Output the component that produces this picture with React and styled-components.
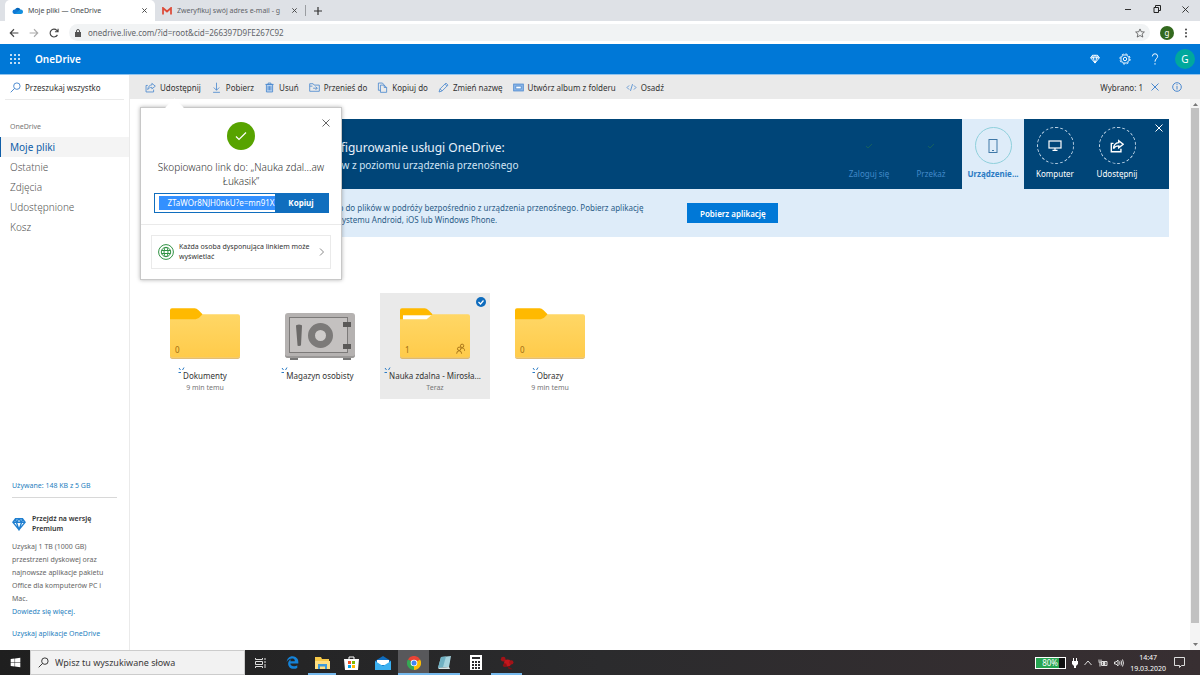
import React from 'react'
import styled, { createGlobalStyle } from 'styled-components'
import { FaEdgeLegacy, FaWindows } from 'react-icons/fa'

const GlobalStyle = createGlobalStyle`
    * {
        box-sizing: border-box;
    }
    body {
        margin: 0;
        font-family: "Noto Sans", "Open Sans", sans-serif;
        font-size: 8px;
        color: #333;
        background-color: white;
    }
    button, input {
        font-family: inherit;
        font-size: inherit;
        color: inherit;
        border: none;
        padding: 0;
        margin: 0;
        background: none;
        outline: none;
    }
    h1, h2, p, ul {
        margin: 0;
        padding: 0;
        font-weight: 400;
        list-style: none;
    }
    a {
        color: inherit;
        text-decoration: none;
    }
    svg {
        display: block;
        flex-shrink: 0;
    }
`

const Page = styled.div`
    height: 100vh;
    display: flex;
    flex-direction: column;
    overflow: hidden;
`

/* ---------- browser window ---------- */

const TabStrip = styled.div`
    height: 21px;
    display: flex;
    align-items: stretch;
    background-color: #dee1e6;
    padding-left: 5px;
    flex-shrink: 0;
`
const Tab = styled.div`
    width: 150px;
    display: flex;
    align-items: center;
    gap: 5px;
    padding: 0 8px 0 7px;
    font-size: 7px;
    color: ${props => props.$active ? "#45494d" : "#5f6368"};
    background-color: ${props => props.$active ? "white" : "transparent"};
    border-radius: 5px 5px 0 0;
`
const TabTitle = styled.span`
    flex: 1;
    overflow: hidden;
    white-space: nowrap;
`
const NewTab = styled.div`
    display: flex;
    align-items: center;
    padding-left: 8px;
    margin: 5px 0;
    border-left: 1px solid #9a9da1;
`
const WindowButtons = styled.div`
    margin-left: auto;
    display: flex;
    align-items: center;
    gap: 21px;
    padding-right: 11px;
    padding-bottom: 3px;
`
const IconButton = styled.button`
    display: flex;
    align-items: center;
    justify-content: center;
    cursor: pointer;
`
const AddressBar = styled.div`
    height: 23px;
    display: flex;
    align-items: center;
    padding: 0 12px 0 9px;
    gap: 10px;
    flex-shrink: 0;
    background-color: white;
`
const UrlBox = styled.label`
    flex: 1;
    height: 17px;
    display: flex;
    align-items: center;
    gap: 7px;
    padding: 0 5px 0 6px;
    background-color: #f1f3f4;
    border-radius: 9px;
`
const UrlInput = styled.input`
    flex: 1;
    color: #5f6368;
`
const Account = styled.button`
    width: ${props => props.$size};
    height: ${props => props.$size};
    border-radius: 50%;
    background-color: ${props => props.$bg};
    color: white;
    font-size: ${props => props.$font};
    line-height: 1;
    flex-shrink: 0;
`

/* ---------- OneDrive ---------- */

const Header = styled.header`
    height: 31px;
    display: flex;
    align-items: center;
    padding: 0 5px 0 10px;
    background-color: #0078d7;
    border-bottom: 1px solid #8fc3ee;
    color: white;
    flex-shrink: 0;
`
const Brand = styled.h1`
    font-size: 10px;
    font-weight: 600;
    margin-left: 15px;
`
const HeaderIcons = styled.div`
    margin-left: auto;
    margin-right: 5px;
    display: flex;
    align-items: center;
`
const HeaderButton = styled(IconButton)`
    width: 30px;
    height: 30px;
`
const Body = styled.div`
    flex: 1;
    min-height: 0;
    display: flex;
`
const Sidebar = styled.aside`
    width: 130px;
    display: flex;
    flex-direction: column;
    border-right: 1px solid #eaeaea;
    flex-shrink: 0;
`
const Search = styled.label`
    display: flex;
    align-items: center;
    gap: 4px;
    height: 25px;
    margin: 0 5px;
    padding-left: 5px;
    border-bottom: 1px solid #eaeaea;
`
const SearchInput = styled.input`
    width: 100px;
    &::placeholder {
        color: #333;
        opacity: 1;
    }
`
const NavTitle = styled.p`
    font-size: 7px;
    line-height: 20px;
    padding-left: 10px;
    margin-top: 17px;
    color: #777;
`
const NavItem = styled.a`
    display: block;
    height: 20px;
    line-height: 20px;
    font-size: 10px;
    font-weight: ${props => props.$active ? 400 : 300};
    padding-left: ${props => props.$active ? "9px" : "10px"};
    color: ${props => props.$active ? "#0f5ea8" : "#555"};
    background-color: ${props => props.$active ? "#f4f4f4" : "transparent"};
    border-left: ${props => props.$active ? "1px solid #0f5ea8" : "none"};
`
const SideFooter = styled.div`
    margin-top: auto;
    padding: 0 12px 10px;
    font-size: 7px;
    line-height: 13px;
    color: #666;
`
const SideLink = styled.a`
    display: block;
    color: #1f7fc0;
    margin-top: ${props => props.$space || "0"};
`
const Rule = styled.div`
    height: 1px;
    margin: 5px 0 16px;
    background-color: #d8d8d8;
`
const Premium = styled.div`
    display: flex;
    align-items: center;
    gap: 6px;
    margin-bottom: 6px;
    font-weight: 600;
    line-height: 10px;
    color: #333;
`
const Content = styled.div`
    flex: 1;
    min-width: 0;
    display: flex;
    flex-direction: column;
`
const Toolbar = styled.div`
    height: 24px;
    display: flex;
    align-items: center;
    gap: 10px;
    padding: 0 14px 0 15px;
    background-color: #eaeaea;
    flex-shrink: 0;
`
const ToolButton = styled.button`
    display: flex;
    align-items: center;
    gap: 4px;
    white-space: nowrap;
    cursor: pointer;
`
const ToolAnchor = styled.div`
    position: relative;
`
const Selection = styled.div`
    margin-left: auto;
    display: flex;
    align-items: center;
    gap: 8px;
`
const InfoButton = styled(IconButton)`
    margin-left: 5px;
`
const ScrollArea = styled.div`
    flex: 1;
    min-height: 0;
    display: flex;
`
const Main = styled.main`
    flex: 1;
    min-width: 0;
    padding: 20px 21px 0 20px;
`
const Scrollbar = styled.div`
    width: 10px;
    display: flex;
    flex-direction: column;
    align-items: center;
    justify-content: space-between;
    padding: 4px 0;
    background-color: #f4f4f4;
`
const Thumb = styled.div`
    width: 8px;
    flex: 1;
    margin: 2px 0 50px;
    background-color: #c1c1c1;
    margin-bottom: 20px;
`

/* ---------- banner ---------- */

const BannerTop = styled.section`
    height: 70px;
    display: flex;
    padding: 0 21px 0 118px;
    color: white;
    background-color: #004578;
    position: relative;
`
const BannerText = styled.div`
    flex: 1;
    padding-top: 20px;
    white-space: nowrap;
`
const BannerTitle = styled.h2`
    font-size: 12px;
    line-height: 18px;
    color: #e6f0fa;
`
const BannerSub = styled.p`
    font-size: 10px;
    line-height: 16px;
    color: #d0e4f5;
`
const Step = styled.button`
    width: 62px;
    display: flex;
    flex-direction: column;
    align-items: center;
    padding-top: 8px;
    gap: 4px;
    line-height: 12px;
    white-space: nowrap;
    font-weight: ${props => props.$state === "active" ? 700 : 400};
    color: ${props => props.$state === "done" ? "#4289c9" : props.$state === "active" ? "#2b7bc4" : "white"};
    background-color: ${props => props.$state === "active" ? "#deecf9" : "transparent"};
`
const StepCircle = styled.span`
    width: 37px;
    height: 37px;
    display: flex;
    align-items: center;
    justify-content: center;
    border-radius: 50%;
    border: ${props => props.$state === "done" ? "none" : props.$state === "active" ? "1px solid #8fd0dc" : "1px dashed #c8dced"};
`
const BannerClose = styled(IconButton)`
    position: absolute;
    top: 5px;
    right: 6px;
`
const BannerBottom = styled.section`
    height: 48px;
    display: flex;
    gap: 44px;
    padding-left: 137px;
    background-color: #deecf9;
    color: #2b5c88;
`
const BannerCopy = styled.p`
    padding-top: 13px;
    line-height: 12px;
    white-space: nowrap;
`
const GetApp = styled.button`
    width: 91px;
    height: 20px;
    margin-top: 14px;
    background-color: #0078d7;
    color: white;
    font-weight: 600;
`

/* ---------- tiles ---------- */

const Tiles = styled.ul`
    display: flex;
    gap: 5px;
    margin-top: 56px;
`
const Tile = styled.li`
    position: relative;
    width: 110px;
    height: 106px;
    display: flex;
    flex-direction: column;
    align-items: center;
    padding-top: 15px;
    background-color: ${props => props.$selected ? "#eaeaea" : "transparent"};
`
const Thumbnail = styled.div`
    position: relative;
    height: 62px;
`
const Count = styled.span`
    position: absolute;
    left: 5px;
    bottom: 15px;
    line-height: 11px;
    color: #a06c12;
`
const TileName = styled.div`
    position: relative;
    line-height: 12px;
    white-space: nowrap;
`
const NewMark = styled.div`
    position: absolute;
    top: -3px;
    left: -5px;
`
const TileSub = styled.div`
    font-size: 7px;
    line-height: 11px;
    color: #777;
`
const Check = styled.div`
    position: absolute;
    top: 4px;
    right: 4px;
`

/* ---------- share callout ---------- */

const Callout = styled.div`
    position: absolute;
    z-index: 2;
    top: 25px;
    left: -5px;
    width: 202px;
    background-color: white;
    border: 1px solid #c8c8c8;
    box-shadow: 0 0 4px rgba(0, 0, 0, 0.3);
    &::before {
        content: "";
        position: absolute;
        top: -7px;
        left: 27px;
        width: 13px;
        height: 13px;
        background-color: white;
        transform: rotate(45deg);
    }
`
const CalloutBody = styled.div`
    position: relative;
    display: flex;
    flex-direction: column;
    align-items: center;
    padding: 14px 12px 11px;
    border-bottom: 1px solid #eaeaea;
`
const CalloutClose = styled(IconButton)`
    position: absolute;
    top: 11px;
    right: 11px;
`
const CalloutText = styled.p`
    font-size: 10px;
    font-weight: 300;
    line-height: 14px;
    text-align: center;
    white-space: nowrap;
    margin: 10px 0 5px;
`
const LinkRow = styled.div`
    display: flex;
    width: 175px;
    height: 20px;
    padding: 1px 0 1px 4px;
    border: 1px solid #106ebe;
`
const LinkInput = styled.input`
    flex: 1;
    min-width: 0;
    margin: 1px 0;
    text-align: right;
    background-color: #3390ff;
    color: white;
`
const CopyButton = styled.button`
    width: 53px;
    margin: -1px 0;
    background-color: #106ebe;
    color: white;
    font-weight: 700;
`
const Permission = styled.button`
    display: flex;
    align-items: center;
    gap: 5px;
    width: 180px;
    height: 34px;
    margin: 10px;
    padding: 0 6px;
    border: 1px solid #eaeaea;
    font-size: 7px;
    line-height: 10px;
    text-align: left;
    color: #333;
`
const PermissionText = styled.span`
    flex: 1;
    white-space: nowrap;
`

/* ---------- taskbar ---------- */

const Taskbar = styled.footer`
    height: 25px;
    display: flex;
    align-items: stretch;
    color: white;
    background: linear-gradient(to right, #1f1f1f, #2b2b2d 50%, #382f32);
    flex-shrink: 0;
`
const StartButton = styled(IconButton)`
    width: 30px;
    color: white;
`
const TaskSearch = styled.label`
    width: 215px;
    display: flex;
    align-items: center;
    gap: 6px;
    padding-left: 7px;
    background-color: #f2f2f2;
    border: 1px solid #ccc;
    color: #333;
    font-size: 9px;
`
const TaskInput = styled.input`
    flex: 1;
    &::placeholder {
        color: #3a3a3a;
        opacity: 1;
    }
`
const TaskApp = styled(IconButton)`
    width: ${props => props.$wide || "31px"};
    padding: 0 3px;
    background-color: ${props => props.$active ? "#58585b" : "transparent"};
    box-shadow: ${props => props.$open ? "inset 0 -2px 0 #76b9ed" : "none"};
`
const Tray = styled.div`
    margin-left: auto;
    display: flex;
    align-items: center;
    gap: 6px;
    padding-right: 15px;
`
const Battery = styled.div`
    display: flex;
    align-items: center;
    width: 31px;
    height: 12px;
    padding-left: 6px;
    border: 1px solid white;
    background: linear-gradient(to right, #27a552 80%, #111 80%);
    color: white;
    font-size: 8px;
`
const Clock = styled.div`
    font-size: 7px;
    line-height: 11px;
    text-align: center;
    margin-right: 2px;
`

const Icon = ({ w = 11, h = 11, color = "#4a88cf", sw = 1, box = "0 0 16 16", children }) => (
    <svg width={w} height={h} viewBox={box} fill="none" stroke={color} strokeWidth={sw}>
        {children}
    </svg>
)

const Cross = ({ size = 8, color = "#444", sw = 1 }) => (
    <Icon w={size} h={size} color={color} sw={sw} box="0 0 8 8"><path d="M0.5 0.5 7.5 7.5M7.5 0.5 0.5 7.5" /></Icon>
)

const Magnifier = ({ color, size = 11 }) => (
    <Icon w={size} h={size} color={color} sw={1.4}><circle cx="10" cy="6" r="4.7" /><path d="M6.7 9.3 1 15" /></Icon>
)

const ShareIcon = ({ color, size = 11, sw = 1.2 }) => (
    <Icon w={size} h={size} color={color} sw={sw}>
        <path d="M4 5H1.500V14.500H12.500V11" />
        <path d="M10 2 15 6 10 10V7.800C7.500 7.800 5.500 8.600 4 11 4.300 7 6.500 4.500 10 4.200Z" />
    </Icon>
)

const Diamond = ({ size, color }) => (
    <Icon w={size} h={size} color={color} sw={1.5}>
        <path d="M4 2H12L15 6 8 14.500 1 6ZM1 6H15M8 14.500 5 6 8 2 11 6ZM4 2 5 6M12 2 11 6" />
    </Icon>
)

const tools = [
    { name: "Pobierz", icon: <path d="M8 1V12M4 8 8 12 12 8M3 15H13" /> },
    { name: "Usuń", icon: <><path d="M3.500 3.500V14.500H12.500V3.500Z" fill="#b9d2ef" /><path d="M2 3.500H14M6 3.500V1.500H10V3.500M6 6V12M8 6V12M10 6V12" /></> },
    { name: "Przenieś do", icon: <path d="M1 13.500V2.500H6L7.500 4.500H15V13.500ZM1 6H5M6 9H12M9.500 6.500 12 9 9.500 11.500" /> },
    { name: "Kopiuj do", icon: <path d="M5 4.500H10.500L14 8V15H5ZM10.500 4.500V8H14M5 12H2V1.500H8L10 4" /> },
    { name: "Zmień nazwę", icon: <path d="M1.500 14.500 3 10 11.500 1.500 14.500 4.500 6 13ZM3 10 6 13M10 3 13 6" /> },
    { name: "Utwórz album z folderu", icon: <><rect x="1" y="3" width="14" height="10" fill="#8fb8e8" /><path d="M4 6H12V10H4Z" fill="white" /></> },
    { name: "Osadź", icon: <path d="M4.500 5 1.500 8 4.500 11M11.500 5 14.500 8 11.500 11M9.500 3 6.500 13" /> },
]

const steps = [
    { name: "Zaloguj się", state: "done" },
    { name: "Przekaż", state: "done" },
    { name: "Urządzenie...", state: "active" },
    { name: "Komputer", state: "next" },
    { name: "Udostępnij", state: "next" },
]

const items = [
    { name: "Dokumenty", sub: "9 min temu", count: 0 },
    { name: "Magazyn osobisty", vault: true },
    { name: "Nauka zdalna - Mirosła...", sub: "Teraz", count: 1, selected: true },
    { name: "Obrazy", sub: "9 min temu", count: 0 },
]

const StepIcon = ({ step }) => {
    if (step.state === "done") {
        return <Icon w={8} h={8} color="#1c6a55" sw={1.5}><path d="M2 8 6 12 14 4" /></Icon>
    }
    if (step.state === "active") {
        return <Icon w={10} h={14} color="#3f78a8" box="0 0 10 14"><rect x="1" y="0.5" width="8" height="13" /><path d="M4 11.500H6" /></Icon>
    }
    if (step.name === "Komputer") {
        return <Icon w={14} h={11} color="white" box="0 0 14 11" sw={1.2}><rect x="1" y="1" width="12" height="7" /><path d="M7 8V10M4.500 10.300H9.500" /></Icon>
    }
    return <ShareIcon color="white" size={14} sw={1.6} />
}

const Folder = ({ shared, id }) => (
    <svg width="70" height="52" viewBox="0 0 71 52">
        <defs>
            <linearGradient id={id} x1="0" y1="0" x2="0" y2="1">
                <stop offset="0" stopColor="#ffd766" />
                <stop offset="1" stopColor="#ffcb4a" />
            </linearGradient>
        </defs>
        <path d="M0 2Q0 0 2 0H25Q27 0 29 2L33 6V14H0Z" fill="#ffb900" />
        {shared && <path d="M3 7H33V12H3Z" fill="white" />}
        <path d={shared ? "M0 11H27L33 6H69Q71 6 71 8V48Q71 50 69 50H2Q0 50 0 48Z" : "M0 11H26Q29 11 31 8L33 6H69Q71 6 71 8V48Q71 50 69 50H2Q0 50 0 48Z"} fill={`url(#${id})`} />
        <path d="M0 48Q0 50 2 50H69Q71 50 71 48V49Q71 51 69 51H2Q0 51 0 49Z" fill="#d9a84a" />
        {shared && (
            <g fill="none" stroke="#a06c12" strokeWidth="0.9">
                <circle cx="60" cy="41" r="1.700" /><path d="M57.500 46Q57.500 43 60 43T62.500 46" />
                <circle cx="63" cy="38" r="1.700" /><path d="M62 40.500Q65.500 39.500 65.500 43" />
            </g>
        )}
    </svg>
)

const Vault = () => (
    <svg width="70" height="52" viewBox="0 0 70 52">
        <path d="M5 48H13V52H5ZM58 48H66V52H58Z" fill="#777" />
        <rect x="0" y="5" width="70" height="45" rx="3" fill="#b5b2b1" />
        <path d="M0 47Q0 50 3 50H67Q70 50 70 47V46Q70 48 67 48H3Q0 48 0 46Z" fill="#9a9897" />
        <rect x="4.500" y="9.500" width="58" height="35" fill="#c4c1c0" stroke="#7c7a79" />
        <path d="M11 18Q11 16.500 14 16.500T17 18L16 37Q16 38 14 38T12.500 37Z" fill="#6b6968" />
        <circle cx="35.500" cy="27.500" r="9" fill="#cfcccb" stroke="#7c7a79" strokeWidth="7" />
        <path d="M58 14H66V19H58ZM58 36H66V41H58Z" fill="#5b5958" />
    </svg>
)

const Sparkle = () => (
    <Icon w={7} h={8} box="0 0 7 8" color="#2b7bc4"><path d="M1 1 2.500 3M6 0.500 4.500 3M0.500 5.500H3" /></Icon>
)

const ShareCallout = () => (
    <Callout role="dialog" aria-label="Udostępnianie">
        <CalloutBody>
            <CalloutClose aria-label="Zamknij"><Cross size={8} color="#666" /></CalloutClose>
            <svg width="28" height="28" viewBox="0 0 28 28">
                <circle cx="14" cy="14" r="14" fill="#57a300" />
                <path d="M9 14.500 12 17.500 19 10.500" fill="none" stroke="white" strokeWidth="1.200" />
            </svg>
            <CalloutText>Skopiowano link do: „Nauka zdal...aw<br />Łukasik”</CalloutText>
            <LinkRow>
                <LinkInput aria-label="Link" readOnly value="ZTaWOr8NJH0nkU?e=mn91X" />
                <CopyButton>Kopiuj</CopyButton>
            </LinkRow>
        </CalloutBody>
        <Permission>
            <Icon w={16} h={16} color="#2f9142">
                <circle cx="8" cy="8" r="7.400" /><circle cx="8" cy="8" r="4.700" />
                <ellipse cx="8" cy="8" rx="2" ry="4.700" /><path d="M3.500 6.500H12.500M3.500 9.500H12.500" />
            </Icon>
            <PermissionText>Każda osoba dysponująca linkiem może<br />wyświetlać</PermissionText>
            <Icon w={5} h={8} color="#888" box="0 0 5 8"><path d="M1 0.500 4.500 4 1 7.500" /></Icon>
        </Permission>
    </Callout>
)

const Browser = () => (
    <>
        <TabStrip>
            <Tab $active>
                <svg width="11" height="7" viewBox="0 0 22 14">
                    <path d="M6 5A6 6 0 0 1 17 5L12 9Z" fill="#0364b8" />
                    <path d="M5 14A4.500 4.500 0 0 1 6 5Q8 4 11 6L18 11 14 14Z" fill="#0f78d4" />
                    <path d="M17 5A4.500 4.500 0 0 1 18 14H5L12 9Q14 5 17 5Z" fill="#1490df" />
                </svg>
                <TabTitle>Moje pliki — OneDrive</TabTitle>
                <IconButton aria-label="Zamknij kartę"><Cross size={5} sw={1.5} /></IconButton>
            </Tab>
            <Tab>
                <Icon w={10} h={8} box="0 0 20 16" color="#dd4b39" sw={3.500}><path d="M2 15V2L10 9 18 2V15" /></Icon>
                <TabTitle>Zweryfikuj swój adres e-mail - g</TabTitle>
                <IconButton aria-label="Zamknij kartę"><Cross size={5} sw={1.5} /></IconButton>
            </Tab>
            <NewTab>
                <IconButton aria-label="Nowa karta"><Icon w={8} h={8} box="0 0 8 8" color="#333" sw={1.200}><path d="M4 0V8M0 4H8" /></Icon></IconButton>
            </NewTab>
            <WindowButtons>
                <IconButton aria-label="Minimalizuj"><Icon w={8} h={8} box="0 0 8 8" color="#333"><path d="M1 4.500H7" /></Icon></IconButton>
                <IconButton aria-label="Przywróć"><Icon w={8} h={8} box="0 0 8 8" color="#222"><path d="M1 2.500H5.500V7.500H1ZM2.500 2.500V0.500H7.500V5.500H5.500" /></Icon></IconButton>
                <IconButton aria-label="Zamknij"><Cross size={7} color="#222" /></IconButton>
            </WindowButtons>
        </TabStrip>
        <AddressBar>
            <IconButton aria-label="Wstecz"><Icon w={10} h={10} color="#444" sw={1.800}><path d="M15 8H2M8 2 2 8 8 14" /></Icon></IconButton>
            <IconButton aria-label="Dalej"><Icon w={10} h={10} color="#aaa" sw={1.800}><path d="M1 8H14M8 2 14 8 8 14" /></Icon></IconButton>
            <IconButton aria-label="Odśwież"><Icon w={10} h={10} color="#444" sw={1.800}><path d="M13.500 11A6.200 6.200 0 1 1 12.500 3.800L14 5.500M14.500 1V6H9.500" /></Icon></IconButton>
            <UrlBox>
                <svg width="6" height="8" viewBox="0 0 6 8"><rect y="3" width="6" height="5" fill="#555" /><path d="M1.500 3V2A1.500 1.500 0 0 1 4.500 2V3" fill="none" stroke="#555" /></svg>
                <UrlInput aria-label="Adres" defaultValue="onedrive.live.com/?id=root&cid=266397D9FE267C92" />
                <Icon w={10} h={10} color="#555" sw={1.300}><path d="M8 1.500 10 6 15 6.400 11.300 9.700 12.500 14.500 8 12 3.500 14.500 4.700 9.700 1 6.400 6 6Z" /></Icon>
            </UrlBox>
            <Account $size="14px" $bg="#33691e" $font="8px">g</Account>
            <IconButton aria-label="Menu"><svg width="4" height="10" viewBox="0 0 4 10" fill="#444"><circle cx="2" cy="1.500" r="1" /><circle cx="2" cy="5" r="1" /><circle cx="2" cy="8.500" r="1" /></svg></IconButton>
        </AddressBar>
    </>
)

const LeftPane = () => (
    <Sidebar>
        <Search>
            <Magnifier color="#4a88cf" />
            <SearchInput aria-label="Szukaj" placeholder="Przeszukaj wszystko" />
        </Search>
        <NavTitle>OneDrive</NavTitle>
        <nav>
            {["Moje pliki", "Ostatnie", "Zdjęcia", "Udostępnione", "Kosz"].map((name, i) => (
                <NavItem key={name} href="#" $active={i === 0}>{name}</NavItem>
            ))}
        </nav>
        <SideFooter>
            <SideLink href="#">Używane: 148 KB z 5 GB</SideLink>
            <Rule />
            <Premium>
                <Diamond size={14} color="#1f7fd0" />
                <span>Przejdź na wersję<br />Premium</span>
            </Premium>
            <p>Uzyskaj 1 TB (1000 GB)<br />przestrzeni dyskowej oraz<br />najnowsze aplikacje pakietu<br />Office dla komputerów PC i<br />Mac.</p>
            <SideLink href="#">Dowiedz się więcej.</SideLink>
            <SideLink href="#" $space="9px">Uzyskaj aplikacje OneDrive</SideLink>
        </SideFooter>
    </Sidebar>
)

const Banner = () => (
    <div>
        <BannerTop>
            <BannerText>
                <BannerTitle>Dokończ konfigurowanie usługi OneDrive:</BannerTitle>
                <BannerSub>Dostęp do plików z poziomu urządzenia przenośnego</BannerSub>
            </BannerText>
            {steps.map(step => (
                <Step key={step.name} $state={step.state}>
                    <StepCircle $state={step.state}><StepIcon step={step} /></StepCircle>
                    {step.name}
                </Step>
            ))}
            <BannerClose aria-label="Zamknij"><Cross size={8} color="white" /></BannerClose>
        </BannerTop>
        <BannerBottom>
            <BannerCopy>
                Uzyskaj dostęp do plików w podróży bezpośrednio z urządzenia przenośnego. Pobierz aplikację<br />
                OneDrive dla systemu Android, iOS lub Windows Phone.
            </BannerCopy>
            <GetApp>Pobierz aplikację</GetApp>
        </BannerBottom>
    </div>
)

const Files = () => (
    <Tiles>
        {items.map((item, i) => (
            <Tile key={item.name} $selected={item.selected}>
                <Thumbnail>
                    {item.vault ? <Vault /> : <Folder id={`folder${i}`} shared={item.selected} />}
                    {!item.vault && <Count>{item.count}</Count>}
                </Thumbnail>
                <TileName><NewMark><Sparkle /></NewMark>{item.name}</TileName>
                <TileSub>{item.sub}</TileSub>
                {item.selected && (
                    <Check>
                        <svg width="10" height="10" viewBox="0 0 10 10"><circle cx="5" cy="5" r="5" fill="#0f6cbd" /><path d="M2.500 5 4.500 7 7.500 3.500" fill="none" stroke="white" strokeWidth="1.200" /></svg>
                    </Check>
                )}
            </Tile>
        ))}
    </Tiles>
)

const WindowsTaskbar = () => (
    <Taskbar>
        <StartButton aria-label="Start"><FaWindows size={11} /></StartButton>
        <TaskSearch>
            <Magnifier color="#333" size={11} />
            <TaskInput aria-label="Wyszukaj" placeholder="Wpisz tu wyszukiwane słowa" />
        </TaskSearch>
        <TaskApp aria-label="Widok zadań">
            <Icon w={11} h={10} color="#ddd" box="0 0 11 10"><path d="M0.500 0V1.500H7.500V0M0.500 3.500H7.500V6.500H0.500ZM0.500 10V8.500H7.500V10M10 0V2M10 3V5M10 6V10" /></Icon>
        </TaskApp>
        <TaskApp aria-label="Edge" $wide="32px"><FaEdgeLegacy size={13} color="#1583d8" /></TaskApp>
        <TaskApp aria-label="Eksplorator" $open $wide="28px">
            <svg width="15" height="12" viewBox="0 0 15 12"><path d="M0 0H6L7 2H14V11H0Z" fill="#f7c948" /><path d="M0 4H15V12H0Z" fill="#ffdf80" /><path d="M3 7H12V12H10V9.500H5V12H3Z" fill="#3f9ad8" /></svg>
        </TaskApp>
        <TaskApp aria-label="Sklep">
            <svg width="15" height="14" viewBox="0 0 15 14"><path d="M0 3H15L14 14H1Z" fill="white" /><path d="M5 4V1H10V4" fill="none" stroke="white" /><path d="M4 5H7V8H4Z" fill="#f25022" /><path d="M8 5H11V8H8Z" fill="#7fba00" /><path d="M4 9H7V12H4Z" fill="#00a4ef" /><path d="M8 9H11V12H8Z" fill="#ffb900" /></svg>
        </TaskApp>
        <TaskApp aria-label="Poczta">
            <svg width="16" height="14" viewBox="0 0 16 14"><path d="M0 5 8 0 16 5V14H0Z" fill="#0f6cbd" /><path d="M2 4H14V9H2Z" fill="white" /><path d="M0 5 8 10 16 5V14H0Z" fill="#3bb0f0" /></svg>
        </TaskApp>
        <TaskApp aria-label="Chrome" $active $open>
            <svg width="14" height="14" viewBox="0 0 14 14">
                <path d="M7 7 0.900 3.500A7 7 0 0 1 13.100 3.500Z" fill="#ea4335" />
                <path d="M7 7 13.100 3.500A7 7 0 0 1 7 14Z" fill="#fbbc05" />
                <path d="M7 7 7 14A7 7 0 0 1 0.900 3.500Z" fill="#34a853" />
                <circle cx="7" cy="7" r="3.300" fill="white" /><circle cx="7" cy="7" r="2.500" fill="#4285f4" />
            </svg>
        </TaskApp>
        <TaskApp aria-label="Notatnik" $open>
            <svg width="15" height="14" viewBox="0 0 15 14"><path d="M4 1 14 0 12 11 1 12Z" fill="#a5d3de" /><path d="M1 12 12 11 13 13H2Z" fill="#d9e4e6" /><path d="M4 1 9 0.500 6 11 1 12Z" fill="#6fb0c2" /></svg>
        </TaskApp>
        <TaskApp aria-label="Kalkulator">
            <svg width="12" height="15" viewBox="0 0 12 15"><path d="M0 0H12V15H0Z" fill="white" /><path d="M2 2H10V4H2ZM2 6H4V8H2ZM5 6H7V8H5ZM8 6H10V8H8ZM2 9H4V11H2ZM5 9H7V11H5ZM8 9H10V11H8ZM2 12H4V14H2ZM5 12H7V14H5ZM8 12H10V14H8Z" fill="#2b2b2d" /></svg>
        </TaskApp>
        <TaskApp aria-label="Gra" $open>
            <svg width="14" height="14" viewBox="0 0 13 13"><circle cx="3" cy="3" r="2.200" fill="#a31318" /><circle cx="7" cy="6.500" r="3.200" fill="#c4161c" /><circle cx="10.500" cy="6" r="2" fill="#a31318" /><circle cx="4.500" cy="8.500" r="1.800" fill="#8e1115" /><path d="M7 9 12 12.500 8 12Z" fill="#7c0f12" /></svg>
        </TaskApp>
        <Tray>
            <Battery>80%</Battery>
            <svg width="6" height="10" viewBox="0 0 6 10" fill="white"><path d="M1 0H2V3H4V0H5V3H6V6L4 8V10H2V8L0 6V3H1Z" /></svg>
            <Icon w={8} h={6} box="0 0 8 6" color="#ddd"><path d="M0.500 5 4 1 7.500 5" /></Icon>
            <Icon w={10} h={8} box="0 0 10 8" color="#ddd"><path d="M3.500 2.500H9V6.500H3.500ZM1 0.500V2.500M3 0.500V2.500M0.500 3H3.500M2 3V7.500" /><path d="M5 3.500H7V5.500H5Z" fill="#ddd" /></Icon>
            <Icon w={10} h={8} box="0 0 10 8" color="#ddd"><path d="M0.500 3H2L4 1V7L2 5H0.500ZM5.500 2.500Q6.500 4 5.500 5.500M7 1.500Q8.500 4 7 6.500M8.500 0.500Q10.500 4 8.500 7.500" /></Icon>
            <Clock>14:47<br />19.03.2020</Clock>
            <Icon w={11} h={11} box="0 0 11 11" color="#ddd"><path d="M0.500 0.500H10.500V8.500H7.500L5.500 10.500V8.500H0.500Z" /></Icon>
        </Tray>
    </Taskbar>
)

const App = () => {
    return (
        <Page>
            <GlobalStyle />
            <Browser />
            <Header>
                <IconButton aria-label="Aplikacje">
                    <svg width="10" height="10" viewBox="0 0 10 10" fill="white">
                        {[1, 5, 9].map(y => [1, 5, 9].map(x => <circle key={`${x}${y}`} cx={x} cy={y} r="1" />))}
                    </svg>
                </IconButton>
                <Brand>OneDrive</Brand>
                <HeaderIcons>
                    <HeaderButton aria-label="Premium"><Diamond size={10} color="white" /></HeaderButton>
                    <HeaderButton aria-label="Ustawienia">
                        <Icon w={12} h={12} color="white" sw={1.300}><circle cx="8" cy="8" r="5.500" /><circle cx="8" cy="8" r="2.300" /><circle cx="8" cy="8" r="6.800" strokeDasharray="2.670 2.670" /></Icon>
                    </HeaderButton>
                    <HeaderButton aria-label="Pomoc">
                        <Icon w={12} h={12} color="white" sw={1.300}><path d="M4.500 4.500Q4.500 1 8 1T11.500 4.500C11.500 7 8 8 8 11.500M8 13.500V15.500" /></Icon>
                    </HeaderButton>
                </HeaderIcons>
                <Account $size="20px" $bg="#00a89d" $font="10px">G</Account>
            </Header>
            <Body>
                <LeftPane />
                <Content>
                    <Toolbar>
                        <ToolAnchor>
                            <ToolButton><ShareIcon />Udostępnij</ToolButton>
                            <ShareCallout />
                        </ToolAnchor>
                        {tools.map(tool => (
                            <ToolButton key={tool.name}><Icon sw={1.2}>{tool.icon}</Icon>{tool.name}</ToolButton>
                        ))}
                        <Selection>
                            Wybrano: 1
                            <IconButton aria-label="Wyczyść"><Cross size={8} color="#4a88cf" /></IconButton>
                            <InfoButton aria-label="Informacje">
                                <Icon w={14} h={10} box="0 0 14 10"><circle cx="5" cy="5" r="4.300" /><path d="M5 4V7.500M5 2.200V3.200" /></Icon>
                            </InfoButton>
                        </Selection>
                    </Toolbar>
                    <ScrollArea>
                        <Main>
                            <Banner />
                            <Files />
                        </Main>
                        <Scrollbar>
                            <svg width="5" height="3" viewBox="0 0 5 3"><path d="M0 3 2.500 0 5 3Z" fill="#777" /></svg>
                            <Thumb />
                            <svg width="5" height="3" viewBox="0 0 5 3"><path d="M0 0 2.500 3 5 0Z" fill="#777" /></svg>
                        </Scrollbar>
                    </ScrollArea>
                </Content>
            </Body>
            <WindowsTaskbar />
        </Page>
    )
}

export default App
